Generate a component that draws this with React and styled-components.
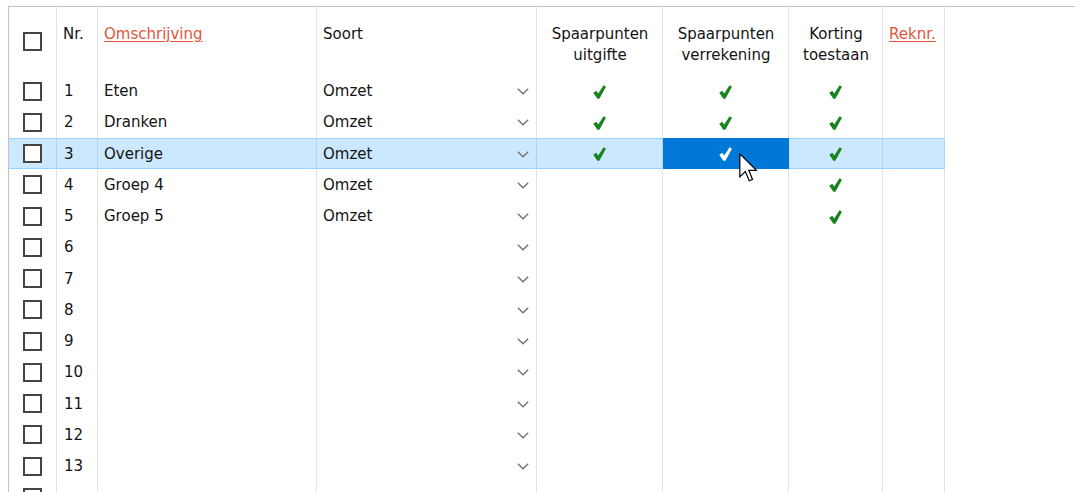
import React from "react";
import styled, { createGlobalStyle, css } from "styled-components";

const Global = createGlobalStyle`
  html, body { margin: 0; padding: 0; background: #ffffff; }
  body { font-family: "DejaVu Sans", Verdana, sans-serif; }
`;

const COLS = "48px 41px 219px 220px 126px 126px 94px 62px 1fr";

const Page = styled.div`
  height: 492px;
  overflow: hidden;
  padding-top: 6px;
  padding-left: 8px;
  box-sizing: border-box;
  position: relative;
`;

const Table = styled.div`
  display: flex;
  flex-direction: column;
  border-top: 1px solid #c3c3c3;
  border-left: 1px solid #c3c3c3;
  font-size: 15px;
  color: #141414;
`;

const Row = styled.div`
  display: grid;
  grid-template-columns: ${COLS};
  height: ${(p) => (p.$header ? "68.5px" : "31.25px")};
`;

const Cell = styled.div`
  box-sizing: border-box;
  display: flex;
  align-items: ${(p) => (p.$header ? "flex-start" : "center")};
  justify-content: ${(p) =>
    p.$align === "center" ? "center" : p.$align === "between" ? "space-between" : "flex-start"};
  padding: ${(p) => (p.$header ? "17px 5px 0 6px" : "1px 7px 0 6px")};
  line-height: 21px;
  white-space: nowrap;
  border-right: ${(p) => (p.$last ? "none" : "1px solid #e2e2ea")};
  text-align: ${(p) => (p.$align === "center" ? "center" : "left")};
  ${(p) =>
    p.$selected &&
    css`
      background: #cce8ff;
      box-shadow: inset 0 1px 0 #99d1ff, inset 0 -1px 0 #99d1ff;
      border-right-color: #b5d3ee;
    `}
  ${(p) =>
    p.$active &&
    css`
      background: #0078d7;
      box-shadow: none;
      border-right-color: #0078d7;
    `}
  ${(p) =>
    p.$boxcol &&
    css`
      justify-content: center;
      align-items: center;
      padding: 0;
    `}
`;

const Box = styled.span`
  width: 19px;
  height: 19px;
  box-sizing: border-box;
  border: 2px solid #444444;
  background: #fff;
  display: block;
`;

const Link = styled.span`
  color: #e2553a;
  text-decoration: underline;
  text-underline-offset: 2px;
`;

const Num = styled.span`
  padding-left: 1px;
`;

const Cursor = styled.svg`
  position: absolute;
  left: 739px;
  top: 153px;
  pointer-events: none;
`;

function Check({ white }) {
  return (
    <svg width="13" height="14" viewBox="0 0 12 13">
      <path
        d="M0.2 7.3 L3 5.3 L4.8 7.9 L9.8 0.2 L12 1.6 L5.9 12.8 L4 12.8 Z"
        fill={white ? "#ffffff" : "#17841f"}
      />
    </svg>
  );
}

function Chevron() {
  return (
    <svg width="12" height="7" viewBox="0 0 12 7">
      <polyline points="0.8,0.8 6,5.8 11.2,0.8" fill="none" stroke="#707070" strokeWidth="1.3" />
    </svg>
  );
}

const rows = [
  { nr: 1, name: "Eten", soort: "Omzet", a: true, b: true, c: true },
  { nr: 2, name: "Dranken", soort: "Omzet", a: true, b: true, c: true },
  { nr: 3, name: "Overige", soort: "Omzet", a: true, b: true, c: true, sel: true },
  { nr: 4, name: "Groep 4", soort: "Omzet", c: true },
  { nr: 5, name: "Groep 5", soort: "Omzet", c: true },
  ...[6, 7, 8, 9, 10, 11, 12, 13].map((n) => ({ nr: n, name: "", soort: "" })),
  { nr: "", name: "", soort: "", nochev: true },
];

export default function App() {
  return (
    <Page>
      <Global />
      <Table>
        <Row $header>
          <Cell $boxcol>
            <Box />
          </Cell>
          <Cell $header>Nr.</Cell>
          <Cell $header>
            <Link>Omschrijving</Link>
          </Cell>
          <Cell $header>Soort</Cell>
          <Cell $header $align="center">
            Spaarpunten
            <br />
            uitgifte
          </Cell>
          <Cell $header $align="center">
            Spaarpunten
            <br />
            verrekening
          </Cell>
          <Cell $header $align="center">
            Korting
            <br />
            toestaan
          </Cell>
          <Cell $header>
            <Link>Reknr.</Link>
          </Cell>
          <Cell $header $last />
        </Row>
        {rows.map((r, i) => (
          <Row key={i}>
            <Cell $boxcol $selected={r.sel}>
              <Box />
            </Cell>
            <Cell $selected={r.sel}>
              <Num>{r.nr}</Num>
            </Cell>
            <Cell $selected={r.sel}>{r.name}</Cell>
            <Cell $selected={r.sel} $align="between">
              <span>{r.soort}</span>
              {!r.nochev && <Chevron />}
            </Cell>
            <Cell $selected={r.sel} $align="center">
              {r.a && <Check />}
            </Cell>
            <Cell $selected={r.sel} $active={r.sel} $align="center">
              {r.b && <Check white={r.sel} />}
            </Cell>
            <Cell $selected={r.sel} $align="center">
              {r.c && <Check />}
            </Cell>
            <Cell $selected={r.sel} />
            <Cell $last />
          </Row>
        ))}
      </Table>
      <Cursor width="19" height="29" viewBox="0 0 12.6 19.4">
        <path
          d="M0.5 0.5 L0.5 16 L4.2 12.4 L6.8 18.6 L9 17.7 L6.5 11.6 L11.6 11.6 Z"
          fill="#ffffff"
          stroke="#000000"
          strokeWidth="0.8"
          strokeLinejoin="miter"
        />
      </Cursor>
    </Page>
  );
}
